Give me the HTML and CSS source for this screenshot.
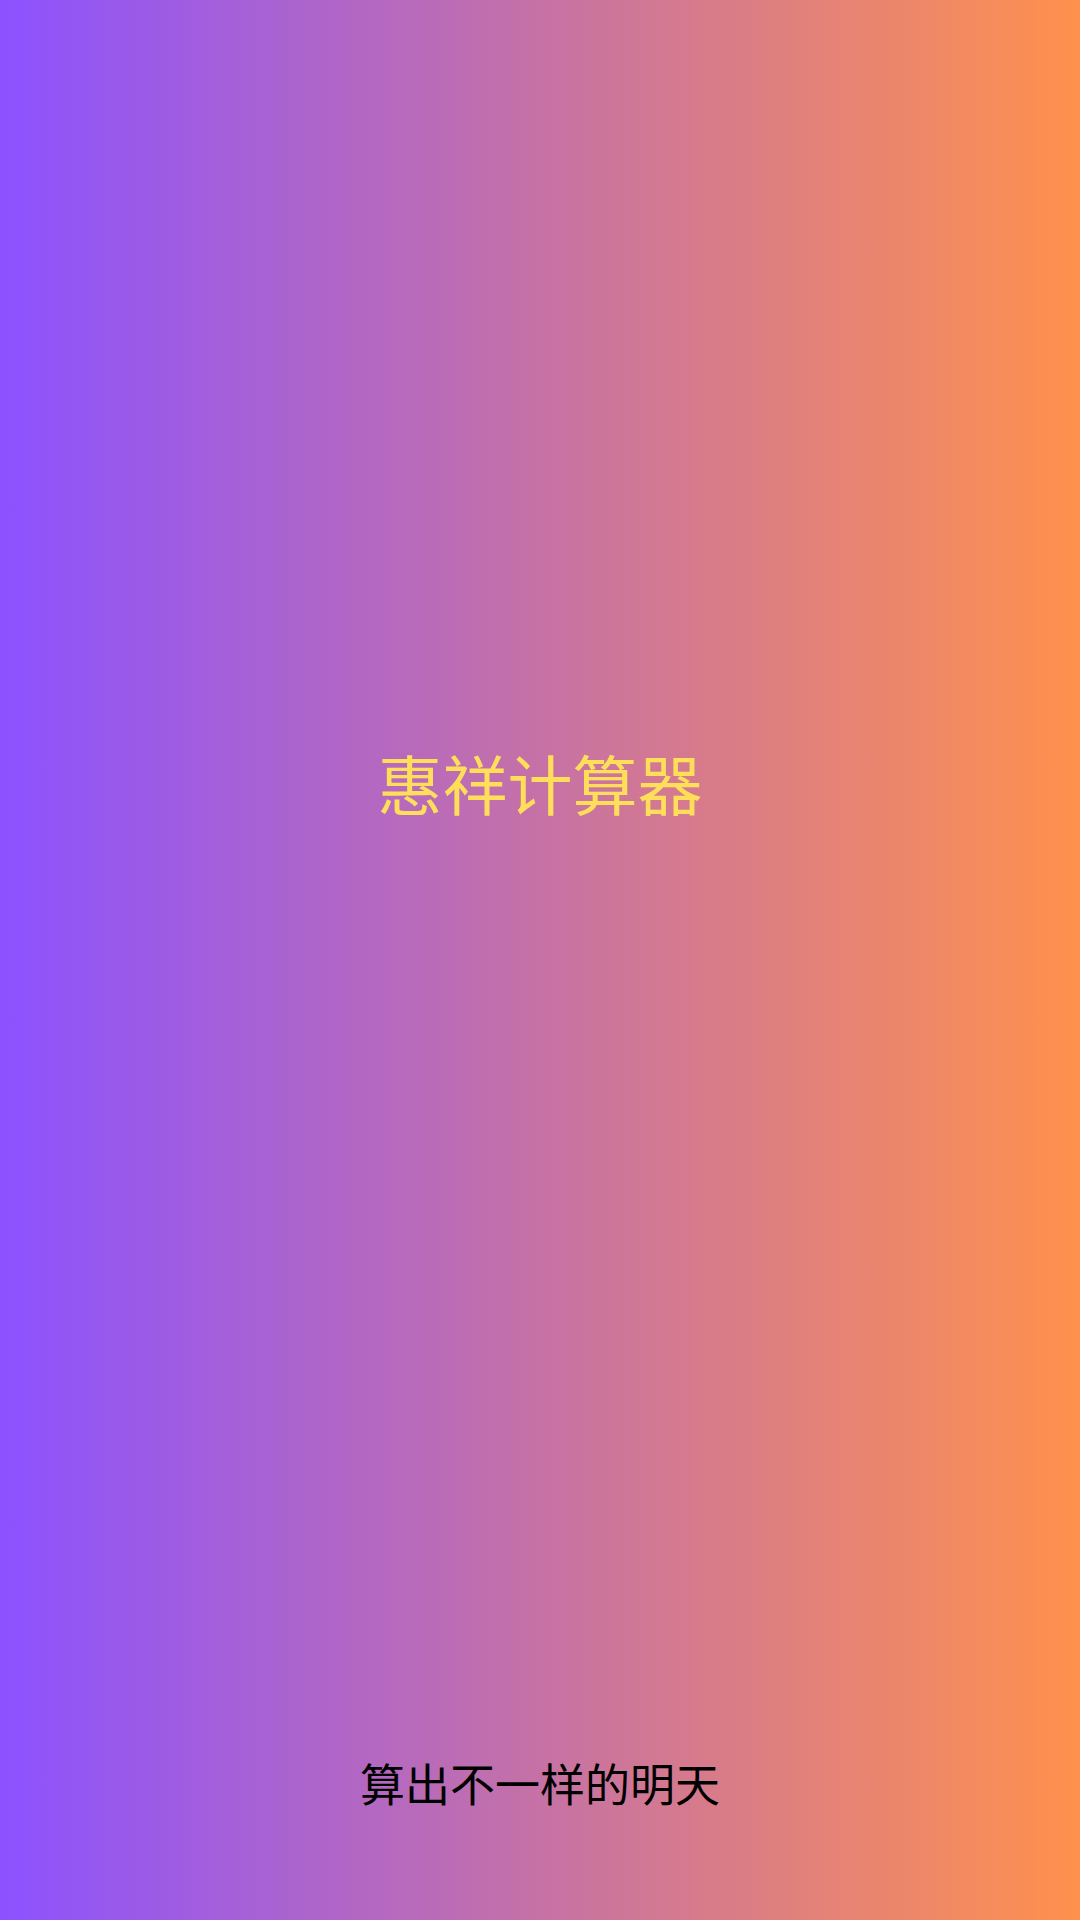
FILE: index.html
```html
<!DOCTYPE html>
<html lang="zh-CN">
<head>
  <meta charset="utf-8">
  <meta name="viewport" content="width=device-width, initial-scale=1">
  <title>惠祥计算器</title>
  <link rel="stylesheet" href="styles.css">
</head>
<body>
  <main class="splash">
    <h1 class="splash-title">惠祥计算器</h1>
    <p class="splash-slogan">算出不一样的明天</p>
  </main>
</body>
</html>
```
FILE: styles.css
```css
body {
  margin: 0;
  font-family: "Noto Sans CJK SC", sans-serif;
}

.splash {
  box-sizing: border-box;
  min-height: 100vh;
  display: flex;
  flex-direction: column;
  align-items: center;
  justify-content: space-between;
  padding: 736px 16px 104px;
  text-align: center;
  background: linear-gradient(90deg, #8c52ff, #ff914d);
}

.splash-title {
  margin: 0;
  font-size: 65px;
  line-height: 92px;
  font-weight: 400;
  color: #ffde59;
}

.splash-slogan {
  margin: 0;
  font-size: 45px;
  line-height: 66px;
  color: #000;
}
```
